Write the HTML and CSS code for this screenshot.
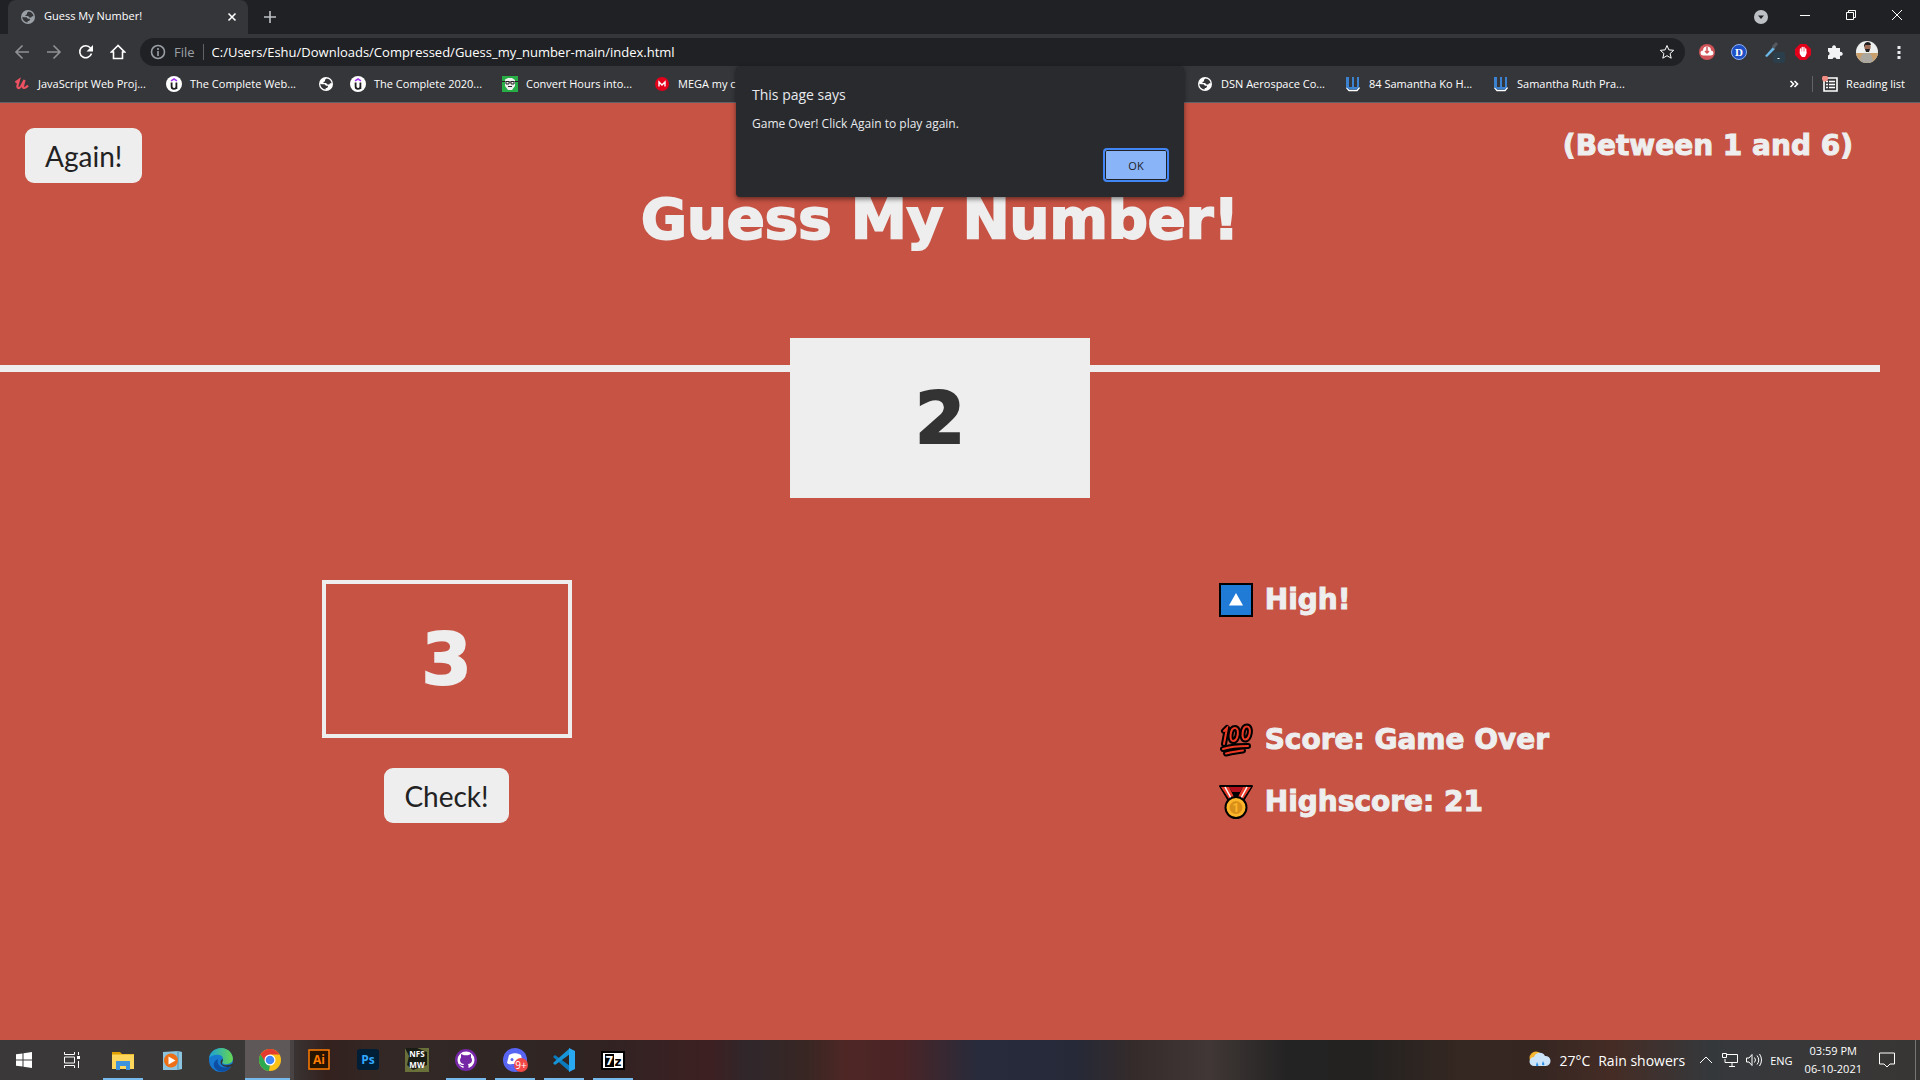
FILE: index.html
```html
<!DOCTYPE html>
<html lang="en">
<head>
<meta charset="utf-8">
<title>Guess My Number!</title>
<link rel="stylesheet" href="styles.css">
</head>
<body>
<svg class="defs" aria-hidden="true">
  <symbol id="globe" viewBox="0 0 16 16"><circle cx="8" cy="8" r="7" fill="currentColor"/><path d="M8.500 2.400 7 3.800v1.400L5.500 6v1H8l1.500 1.500h1.700L12 7.300h1.600A5.700 5.700 0 0 0 8.500 2.400ZM2.300 7.800a5.700 5.700 0 0 0 5.400 5.800v-1.500h1.200l1-1.100V9.700H8L6.600 8.200H3.800Z" class="cut"/></symbol>
  <symbol id="udemy" viewBox="0 0 16 16"><circle cx="8" cy="8" r="8" fill="#fff"/><path d="M5 4.900 8 3l3 1.900" fill="none" stroke="#a435f0" stroke-width="1.500"/><path d="M5.600 6.500v4a2.400 2.400 0 0 0 4.800 0v-4M10.400 9v4" fill="none" stroke="#1c1d1f" stroke-width="1.800"/></symbol>
  <symbol id="wbook" viewBox="0 0 16 16"><path d="M1.500 11.500 4 14.500h8l2.500-3" fill="none" stroke="#fff" stroke-width="1.500"/><path d="M1 1h3v10h3V1h2v10h3V1h2v10l-2 2.500H4L1 11Z" fill="#3b82d0"/></symbol>
</svg>

<div class="browser">
  <div class="tabstrip">
    <div class="tab">
      <svg class="i16 muted"><use href="#globe"/></svg>
      <span class="tab-title">Guess My Number!</span>
      <button class="bare" aria-label="Close tab"><svg class="i16" viewBox="0 0 16 16"><path d="m4.500 4.500 7 7m0-7-7 7" class="line w2"/></svg></button>
    </div>
    <button class="bare new-tab" aria-label="New tab"><svg class="i16" viewBox="0 0 16 16"><path d="M8 2v12M2 8h12" class="line w2"/></svg></button>
    <div class="window-buttons">
      <button class="bare wb low" aria-label="Search tabs"><svg class="i16" viewBox="0 0 16 16"><circle cx="8" cy="8" r="7" fill="#bdc1c6"/><path d="M5 6.500h6L8 10Z" fill="#202124"/></svg></button>
      <button class="bare wb" aria-label="Minimise"><svg class="i16" viewBox="0 0 16 16"><path d="M3 8.500h10" class="line"/></svg></button>
      <button class="bare wb" aria-label="Restore"><svg class="i16" viewBox="0 0 16 16"><path d="M3.500 5.500h7v7h-7ZM5.500 5.500v-2h7v7h-2" class="line"/></svg></button>
      <button class="bare wb" aria-label="Close"><svg class="i16" viewBox="0 0 16 16"><path d="m3 3 10 10M13 3 3 13" class="line"/></svg></button>
    </div>
  </div>

  <div class="toolbar">
    <div class="nav">
      <button class="bare dim" aria-label="Back"><svg class="i16" viewBox="0 0 16 16"><path d="M15 8H2m6.500-6.500L2 8l6.500 6.500" class="line w2"/></svg></button>
      <button class="bare dim" aria-label="Forward"><svg class="i16" viewBox="0 0 16 16"><path d="M1 8h13M7.500 1.500 14 8l-6.500 6.500" class="line w2"/></svg></button>
      <button class="bare" aria-label="Reload"><svg class="i16" viewBox="0 0 16 16"><path d="M13.500 9.500A6 6 0 1 1 12.500 4" class="line w2"/><path d="M15 1v6.500H8.500Z" fill="#fff"/></svg></button>
      <button class="bare" aria-label="Home"><svg class="i16" viewBox="0 0 16 16"><path d="M8 1.500 1.500 8H3.500v6.500h9V8h2Z" class="line w2"/></svg></button>
    </div>
    <div class="omnibox">
      <svg class="i16 muted" viewBox="0 0 16 16"><circle cx="8" cy="8" r="6.500" class="line w2"/><path d="M8 7v5M8 4v2" class="line w2"/></svg>
      <span class="scheme">File</span>
      <input class="url" aria-label="Address" value="C:/Users/Eshu/Downloads/Compressed/Guess_my_number-main/index.html">
      <svg class="i16 star" viewBox="0 0 16 16"><path d="m8 1.500 1.900 4.400 4.800.4-3.600 3.200 1.100 4.700L8 11.700l-4.200 2.500 1.100-4.700-3.600-3.200 4.800-.4Z" class="line"/></svg>
    </div>
    <div class="extensions">
      <svg class="i16" viewBox="0 0 16 16"><circle cx="8" cy="8" r="8" fill="#cf5357"/><path d="M4 11.500a2.500 2.500 0 0 1 0-5 4 4 0 0 1 8 0 2.500 2.500 0 0 1 0 5Z" fill="#fff"/><path d="M8 3v5.500M6 7l2 2 2-2" fill="none" stroke="#cf5357" stroke-width="1.500"/></svg>
      <svg class="i16" viewBox="0 0 16 16"><circle cx="8" cy="8" r="7.500" fill="#1e4fc4" stroke="#8fb0f2"/><text x="8" y="12" class="serif-d">D</text></svg>
      <svg class="picker" viewBox="0 0 22 22"><path d="m2 15 8-9 2 2-8 8Z" fill="#6ab7e8"/><path d="m9 5 4-4 2 2-4 5Z" fill="#555a60"/><rect x="10" y="11" width="12" height="11" rx="2" fill="#2a3e4c"/><path d="M14.500 17.500h2" stroke="#fff"/></svg>
      <svg class="i16" viewBox="0 0 16 16"><path d="M5 0h6l5 5v6l-5 5H5l-5-5V5Z" fill="#e2001a"/><path d="M5.500 8.500V5M7.200 8V3.500M9 8V3.500M10.700 9V5" stroke="#fff" stroke-width="1.400" stroke-linecap="round"/><path d="M4.800 7.500h6.600V10l-1.400 3H7L4.800 10Z" fill="#fff"/></svg>
      <svg class="i16" viewBox="0 0 16 16"><path d="M1 4h4.200a2 2 0 1 1 3.700 0H13v4a2 2 0 1 1 0 3.700V15H9.400a2 2 0 0 0-3.800 0H1v-3.600a2 2 0 0 0 0-3.900Z" fill="#f1f3f4"/></svg>
      <svg class="avatar" viewBox="0 0 22 22"><defs><clipPath id="round"><circle cx="11" cy="11" r="11"/></clipPath></defs><g clip-path="url(#round)"><path d="M0 0h22v22H0Z" fill="#eef0ef"/><path d="M0 12h22v10H0Z" fill="#c9a06b"/><path d="M4 22c0-7 2-10 7-10s6 5 6 10Z" fill="#a9a79f"/><circle cx="11.500" cy="6" r="3.200" fill="#9b6b55"/><path d="M8 5c0-5 7-5 7-1H9v2ZM9 8h5l-1 3h-3Z" fill="#231f20"/></g></svg>
      <svg class="i16" viewBox="0 0 16 16"><path d="M6.500 2h3v3h-3Zm0 5h3v3h-3Zm0 5h3v3h-3Z" fill="#e8eaed"/></svg>
    </div>
  </div>

  <nav class="bookmarks">
    <a href="#"><svg class="i16" viewBox="0 0 16 16"><path d="M1.500 6.500 5 4 3.500 9.500c-.5 3 1.800 3.500 3.500 1L10.500 4 9 10c-.4 3 2.500 2.500 5-.5" fill="none" stroke="#eb5160" stroke-width="2.200"/></svg>JavaScript Web Proj...</a>
    <a href="#"><svg class="i16"><use href="#udemy"/></svg>The Complete Web...</a>
    <a href="#" class="icon-only" aria-label="Bookmark"><svg class="i16"><use href="#globe"/></svg></a>
    <a href="#"><svg class="i16"><use href="#udemy"/></svg>The Complete 2020...</a>
    <a href="#"><svg class="i16" viewBox="0 0 16 16"><path d="M0 0h16v16H0Z" fill="#27ae45"/><path d="M3 3.500 6 2h4l3 2v6l-3 4H6l-3-4Z" fill="#eee"/><path d="M0 5.500h3.500M12.500 5.500H16M4 5.500h3V8H4ZM9 5.500h3V8H9ZM7 6h2M6 10.500h4" fill="none" stroke="#222"/></svg>Convert Hours into...</a>
    <a href="#"><svg class="i16" viewBox="0 0 16 16"><circle cx="8" cy="8" r="7" fill="#e3001b"/><path d="M5 10.500V6l3 3 3-3v4.500" fill="none" stroke="#fff" stroke-width="1.400"/></svg>MEGA my c</a>
    <span class="bookmark-space"></span>
    <a href="#" class="short"><svg class="i16"><use href="#globe"/></svg>DSN Aerospace Co...</a>
    <a href="#" class="short"><svg class="i16"><use href="#wbook"/></svg>84 Samantha Ko H...</a>
    <a href="#" class="short"><svg class="i16"><use href="#wbook"/></svg>Samantha Ruth Pra...</a>
    <div class="bookmarks-end">
      <button class="bare" aria-label="More bookmarks"><svg class="i16" viewBox="0 0 16 16"><path d="m4.500 5 3 3-3 3m4-6 3 3-3 3" class="line w2"/></svg></button>
      <a href="#" class="reading"><svg class="i16" viewBox="0 0 16 16"><path d="M2 2h13v13H2Z" class="line w2"/><path d="M4 5.500h2m1 0h6M4 8.500h2m1 0h6M4 11.500h2m1 0h6" class="line w2"/><circle cx="3" cy="2.500" r="3" fill="#f28b82"/></svg>Reading list</a>
    </div>
  </nav>

  <div class="dialog" role="alertdialog" aria-labelledby="says">
    <h2 id="says">This page says</h2>
    <p>Game Over! Click Again to play again.</p>
    <button class="ok">OK</button>
  </div>
</div>

<div class="page">
  <div class="game">
    <header>
      <div class="top-row">
        <button class="btn">Again!</button>
        <p class="between">(Between 1 and 6)</p>
      </div>
      <h1>Guess My Number!</h1>
      <div class="rule"><div class="number">2</div></div>
    </header>
    <main>
      <section class="left">
        <input class="guess" aria-label="Your guess" value="3">
        <button class="btn">Check!</button>
      </section>
      <section class="right">
        <p class="message"><svg class="emoji" viewBox="0 0 34 34"><path d="M1 1h32v32H1Z" fill="#1f7bd6" stroke="#000" stroke-width="2"/><path d="m17 10 7 12.500H10Z" fill="#fff"/></svg>High!</p>
        <p><svg class="emoji" viewBox="0 0 34 34"><g fill="none" stroke="#000" stroke-linecap="round" stroke-linejoin="round" stroke-width="6"><path d="m5 8 3-3-3 16M16 5c5 0 3 13-2 13-4 0-3-13 2-13ZM28 3.500c5 0 3 13-2 13-4 0-3-13 2-13ZM4 26c9-3 15-3 25-3M7 30.500c7-2 11-2 17-3"/></g><path d="m5 8 3-3-3 16M16 5c5 0 3 13-2 13-4 0-3-13 2-13ZM28 3.500c5 0 3 13-2 13-4 0-3-13 2-13ZM4 26c9-3 15-3 25-3M7 30.500c7-2 11-2 17-3" fill="none" stroke="#ee3a24" stroke-width="2" stroke-linecap="round"/></svg>Score: Game Over</p>
        <p><svg class="emoji" viewBox="0 0 34 34"><path d="M1 1h32l-9 15H10Z" fill="#000" stroke="#000" stroke-width="2" stroke-linejoin="round"/><path d="M10 2h14l-3 5h-8Z" fill="#b00e1c"/><path d="m2 2 8 12 5-2L10 2Zm30 0-8 12-5-2 5-10Z" fill="#ea3c2d"/><path d="m6 2 6 11M28 2l-6 11" stroke="#fff" stroke-width="1.500"/><circle cx="17" cy="22.500" r="10.500" fill="#fdb62a" stroke="#000" stroke-width="2"/><circle cx="17" cy="22.500" r="6.500" fill="#d9901a"/><text x="17" y="27" class="medal-n">1</text></svg>Highscore: 21</p>
      </section>
    </main>
  </div>
</div>

<footer class="taskbar">
  <button class="task" aria-label="Start"><svg class="i16" viewBox="0 0 16 16"><path d="m0 2.300 6.500-.9v6.100H0Zm7.500-1L16 0v7.500H7.500ZM0 8.500h6.500v6.100L0 13.700Zm7.500 0H16V16l-8.500-1.200Z" fill="#fff"/></svg></button>
  <button class="task" aria-label="Task view"><svg class="i16" viewBox="0 0 16 16"><path d="M.5 0v2.500h10V0M.5 5h10v6H.5ZM.5 16v-2.500h10V16M14.500 0v3m0 6v7" class="line"/><path d="M13 4h3v3h-3Z" fill="#fff"/></svg></button>
  <div class="apps">
  <button class="task open" aria-label="File Explorer"><svg class="i24" viewBox="0 0 24 24"><path d="M1 4h8l2 2h12v15H1Z" fill="#e0a000"/><path d="M1 6.500h22V21H1Z" fill="#ffd65c"/><path d="M5 13h14v9h-4v-4H9v4H5Z" fill="#3d93dc"/></svg></button>
  <button class="task" aria-label="Media player"><svg class="i24" viewBox="0 0 24 24"><path d="m3 4 15-1 4 1v17l-4 1H3Z" fill="#8dc4de"/><path d="M18 3v19" stroke="#4b93b5"/><circle cx="11" cy="12.500" r="7" fill="#ee7016"/><path d="m8.500 8.500 7 4-7 4Z" fill="#fff"/></svg></button>
  <button class="task" aria-label="Edge"><svg class="i24" viewBox="0 0 24 24"><defs><linearGradient id="edge"><stop stop-color="#1ba0d8"/><stop offset="1" stop-color="#66d74f"/></linearGradient></defs><circle cx="12" cy="12" r="12" fill="#1678cf"/><path d="M0 10C2-1 18-4 23 7c3 7-2 10-8 9-3-1-1-2-1-5 0-6-11-5-14-1Z" fill="url(#edge)"/><path d="M9 11c-2 6 4 11 13 7-3 6-10 7-14 4-5-3-4-9 1-11Z" fill="#0e4ea2"/><path d="M14 11c0 3-3 5 1 6s8-1 10-2l-2 3c-4 2-9 1-11-2-1-2 0-5 2-5Z" fill="#343232"/></svg></button>
  <button class="task active" aria-label="Chrome"><svg class="i24" viewBox="0 0 24 24"><circle cx="12" cy="12" r="11" fill="#fbc116"/><path d="M2.500 6.500A11 11 0 0 1 21.500 6.500H12l-5 8Z" fill="#e33b2e"/><path d="M2.500 6.500 8 15l4 1.500L11 23A11 11 0 0 1 2.500 6.500Z" fill="#2da94f"/><circle cx="12" cy="12" r="5.500" fill="#fff"/><circle cx="12" cy="12" r="4.300" fill="#4285f4"/></svg></button>
  <button class="task" aria-label="Illustrator"><svg class="i24" viewBox="0 0 24 24"><path d="M2 2h20v19H2Z" fill="#261300" stroke="#ff7c00" stroke-width="1.500"/><text x="12" y="16" class="app-t" fill="#ff7c00">Ai</text></svg></button>
  <button class="task" aria-label="Photoshop"><svg class="i24" viewBox="0 0 24 24"><rect x="1" y="1" width="22" height="21" rx="3" fill="#001e36"/><text x="12" y="16" class="app-t" fill="#31a8ff">Ps</text></svg></button>
  <button class="task" aria-label="NFS MW"><svg class="i24" viewBox="0 0 24 24"><path d="M0 0h24v24H0Z" fill="#69703a"/><path d="M0 0h12l10 4v13l-14 5-6-5 2-9Z" fill="#191c14"/><text x="12" y="9" class="nfs">NFS</text><text x="12" y="20" class="nfs">MW</text></svg></button>
  <button class="task open" aria-label="GitHub Desktop"><svg class="i24" viewBox="0 0 24 24"><circle cx="12" cy="12" r="11" fill="#7627a5"/><circle cx="12" cy="12" r="8.500" fill="#fff"/><path d="M9.500 21v-3c-3 .5-3.500-1.500-4.500-2 2-.5 2 1.500 4.500 1l.5-1c-4-.5-5-4-3-6.500V6l3 1.300h4L17 6v3.500c2 2.500 1 6-3 6.500l.5 1.500V21Z" fill="#7627a5"/></svg></button>
  <button class="task open" aria-label="Discord"><svg class="i26" viewBox="0 0 26 26"><circle cx="13" cy="13" r="12" fill="#5865f2"/><path d="M9 7c2-1 6-1 8 0l2 1 2 8c-2 2-5 1-5 1h-6s-3 1-5-1l2-8Z" fill="#fff"/><circle cx="10" cy="12.500" r="1.500" fill="#5865f2"/><circle cx="19" cy="18" r="7" fill="#f04747"/><text x="19" y="22" class="badge">9+</text></svg></button>
  <button class="task open" aria-label="VS Code"><svg class="i24" viewBox="0 0 24 24"><path d="m1 9 2-2 15 11V24L1 9Z" fill="#0b7bbd"/><path d="m1 15 2 2L18 6V0L1 15Z" fill="#1694d7"/><path d="m17 0 6 3v18l-6 3Z" fill="#29a9f1"/></svg></button>
  <button class="task open" aria-label="7-Zip"><svg class="i24" viewBox="0 0 24 24"><path d="M1 4h22v17H1Z" fill="#fff" stroke="#000" stroke-width="2"/><path d="M4 6h9v13H4Z" fill="#000"/><text x="8.500" y="17" class="zip" fill="#fff">7</text><text x="17" y="18" class="zip" fill="#000">z</text></svg></button>
  </div>

  <div class="tray">
    <a href="#" class="weather"><svg class="weather-icon" viewBox="0 0 22 20"><circle cx="7" cy="8" r="6.500" fill="#f5b52e"/><path d="M5 16a4.500 4.500 0 0 1 0-9 6 6 0 0 1 11-1 5 5 0 0 1 1 10Z" fill="#cbe4f9"/><path d="m8 12-1 3a1.200 1.200 0 0 0 2.400 0Zm6-1-1 3a1.200 1.200 0 0 0 2.400 0Z" fill="#2a8be0"/></svg><span>27°C</span><span>Rain showers</span></a>
    <svg class="i16" viewBox="0 0 16 16"><path d="m2 11 6-6 6 6" class="line"/></svg>
    <svg class="i16" viewBox="0 0 16 16"><path d="M5 2.500h10.500v8H3V7m4 7.500h6m-3-4v4M.5 1.500h4v4h-4Z" class="line"/></svg>
    <svg class="i16" viewBox="0 0 16 16"><path d="M.5 6H3l3-3.500v11L3 10H.5ZM8.500 5.500q2 2.500 0 5M11 3.500q3.500 4.500 0 9M13.500 2q4 6 0 12" class="line"/></svg>
    <span class="lang">ENG</span>
    <time class="clock"><span>03:59 PM</span><span>06-10-2021</span></time>
    <button class="bare" aria-label="Notifications"><svg class="i16" viewBox="0 0 16 16"><path d="M.5 1h15v11H11l-3 3-3-3H.5Z" class="line"/></svg></button>
    <span class="show-desktop"></span>
  </div>
</footer>
</body>
</html>
```

FILE: styles.css
```css
* { box-sizing: border-box; margin: 0; padding: 0; }

body {
  min-height: 100vh;
  display: flex;
  flex-direction: column;
  background: #c65344;
  font-family: "Open Sans", "Noto Sans", sans-serif;
  font-size: 11px;
  color: #fff;
}

a { color: inherit; text-decoration: none; }
svg { display: block; flex: none; }
.defs { display: none; }
.cut { fill: #35363a; }
.i16 { width: 16px; height: 16px; }
.i24 { width: 24px; height: 24px; }
.i26 { width: 26px; height: 26px; }
.line { fill: none; stroke: currentColor; stroke-width: 1; }
.w2 { stroke-width: 1.6; }
.muted { color: #9aa0a6; }
.dim { opacity: .45; }
.bare { background: none; border: 0; color: #fff; display: grid; place-items: center; }

/* Browser window */
.browser { position: relative; background: #35363a; border-bottom: 1px solid #5f6368; }
.tabstrip { display: flex; height: 34px; background: #202124; padding-left: 8px; }
.tab {
  display: flex; align-items: center; gap: 8px;
  width: 240px; padding: 0 8px 0 12px;
  background: #35363a; border-radius: 8px 8px 0 0;
}
.tab-title { flex: 1; line-height: 16px; padding-bottom: 2px; }
.new-tab { width: 44px; color: #bdc1c6; }
.window-buttons { display: flex; margin-left: auto; align-items: flex-start; }
.wb { width: 46px; height: 29px; }
.wb.low { height: 34px; width: 42px; }

.toolbar { display: flex; align-items: center; padding: 4px 13px 0 14px; }
.nav { display: flex; gap: 16px; width: 126px; }
.omnibox {
  flex: 1; display: flex; align-items: center;
  height: 28px; border-radius: 14px; background: #202124;
  padding: 0 10px; font-size: 13px;
}
.scheme { color: #9aa0a6; margin-left: 8px; padding-right: 8px; border-right: 1px solid #5f6368; line-height: 16px; }
.url { flex: 1; border: 0; background: none; color: #fff; font: inherit; padding-left: 8px; outline: 0; }
.extensions { display: flex; align-items: center; gap: 16px; padding-left: 14px; }
.picker { width: 22px; height: 22px; margin-right: -6px; }
.avatar { width: 22px; height: 22px; margin: 0 -3px; }
.serif-d { font: bold 11px "Liberation Serif", serif; fill: #fff; text-anchor: middle; }

.bookmarks { display: flex; align-items: center; height: 36px; padding-left: 14px; white-space: nowrap; line-height: 16px; }
.bookmarks a { display: flex; align-items: center; gap: 8px; width: 152px; }
.bookmarks .icon-only { width: 32px; }
.bookmarks .short { width: 148px; }
.bookmark-space { width: 391px; flex-shrink: 1; }
.bookmarks-end { display: flex; align-items: center; margin-left: auto; padding-right: 15px; gap: 10px; }
.bookmarks .reading { width: auto; border-left: 1px solid #5f6368; padding-left: 9px; }

.dialog {
  position: absolute; top: 66px; left: 0; right: 0; margin: 0 auto; z-index: 2;
  width: 448px; height: 131px; padding: 19px 15px 15px 16px;
  display: flex; flex-direction: column;
  background: #292a2d; border-radius: 4px; color: #e8eaed;
  box-shadow: 0 2px 5px rgba(0, 0, 0, .5);
}
.dialog h2 { font-size: 14px; font-weight: 400; line-height: 20px; }
.dialog p { line-height: 16px; margin-top: 11px; font-size: 12px; }
.ok {
  align-self: flex-end; margin-top: auto;
  width: 66px; height: 34px; font: 11px "Open Sans", sans-serif; color: #202124;
  background: #8ab4f8; border: 2px solid #4285f4; border-radius: 4px;
  box-shadow: inset 0 0 0 1px #202124;
}

/* Game */
.page { flex: 1; font-family: "DejaVu Sans", sans-serif; font-weight: 700; color: #eee; -webkit-text-stroke: 1px currentColor; }
.game { margin-right: 40px; }
header { display: flex; flex-direction: column; }
.top-row { display: flex; justify-content: space-between; align-items: flex-start; padding: 25px 27px 0 25px; }
.btn {
  height: 55px; padding: 0 20px; border: 0; border-radius: 9px;
  background: #eee; color: #222; font: 28px Lato, sans-serif;
  -webkit-text-stroke: 0;
}
.between { font-size: 28px; line-height: 36px; }
h1 { text-align: center; font-size: 56px; font-weight: 700; line-height: 72px; -webkit-text-stroke-width: 2px; }
.rule { display: flex; justify-content: center; height: 160px; margin-top: 83px;
  background: linear-gradient(#eee, #eee) 0 27px / 100% 7px no-repeat; }
.number {
  width: 300px; display: grid; place-items: center;
  background: #eee; color: #333; font-size: 72px;
  -webkit-text-stroke-width: 2px;
}
main { display: grid; grid-template-columns: 893fr 987fr; padding-top: 82px; }
.left { display: flex; flex-direction: column; align-items: center; gap: 30px; }
.guess {
  width: 250px; height: 158px; border: 4px solid #eee; background: none;
  text-align: center; color: #eee; font: 700 72px "DejaVu Sans", sans-serif;
  -webkit-text-stroke: 2px currentColor;
}
.right { padding-left: 33%; font-size: 28px; line-height: 36px; }
.right p { display: flex; align-items: center; gap: 12px; margin-bottom: 26px; }
.right .message { margin-top: 2px; margin-bottom: 104px; }
.emoji { width: 34px; height: 34px; -webkit-text-stroke: 0; }
.medal-n { font: bold 12px Roboto, sans-serif; fill: #fdb62a; text-anchor: middle; }

/* Taskbar */
.taskbar {
  display: flex; height: 40px;
  background: linear-gradient(90deg, #3a3838 0, #3a3737 15%, #33211e 17%, #332825 20%, #302724 26%, #302322 31%, #3d2022 37%, #30272b 39%, #382623 42%, #4e2725 44%, #4a2426 47%, #272b3c 51%, #262938 56%, #342b2a 59%, #403736 63%, #242323 67%, #232221 71%, #352722 76%, #352622 80%, #452c25 84%, #35383b 89%, #38383a 93%, #383634 100%);
}
.task { width: 48px; border: 0; background: none; display: grid; place-items: center; color: #fff; }
.apps { display: flex; padding-left: 2px; }
.apps .task { width: 49px; }
.open { background: linear-gradient(#76b9ed, #76b9ed) center bottom / 40px 2px no-repeat; }
.apps .active { background: linear-gradient(#76b9ed, #76b9ed) center bottom / 100% 2px no-repeat, #5e5858; box-shadow: inset -4px 0 #4a4344; }
.app-t { font: bold 12px "Open Sans", sans-serif; text-anchor: middle; }
.nfs { font: bold 8px "Open Sans", sans-serif; fill: #fff; text-anchor: middle; }
.badge { font: 10px "Open Sans", sans-serif; fill: #fff; text-anchor: middle; }
.zip { font: bold 12px "DejaVu Sans", sans-serif; text-anchor: middle; }

.tray { display: flex; align-items: center; margin-left: auto; gap: 8px; }
.weather { display: flex; align-items: center; gap: 8px; font-size: 14px; margin-right: 5px; }
.weather-icon { width: 22px; height: 20px; }
.clock { display: flex; flex-direction: column; align-items: center; line-height: 18px; margin: 0 9px 0 4px; padding-bottom: 1px; }
.lang { font-size: 11px; }
.show-desktop { height: 40px; width: 5px; border-left: 1px solid #777; margin-left: 12px; }
```
